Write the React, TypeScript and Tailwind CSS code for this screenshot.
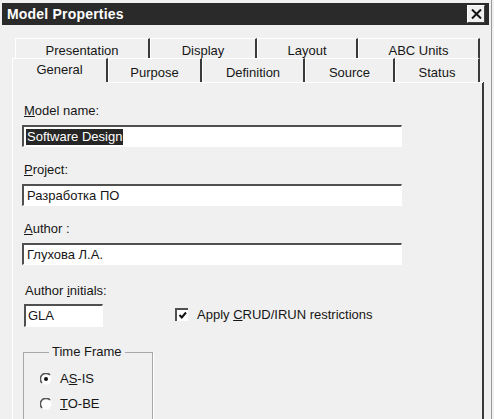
import React from "react";

const ROW_BACK = [
  { label: "Presentation", w: "w-[135px]" },
  { label: "Display", w: "w-[107px]" },
  { label: "Layout", w: "w-[101px]" },
  { label: "ABC Units", w: "w-[122px]" },
];

const ROW_FRONT = [
  { label: "General", w: "w-[96px]" },
  { label: "Purpose", w: "w-[94px]" },
  { label: "Definition", w: "w-[103px]" },
  { label: "Source", w: "w-[90px]" },
  { label: "Status", w: "w-[85px]" },
];

function Radio({ checked }: { checked?: boolean }) {
  return (
    <svg width="12" height="12" viewBox="0 0 12 12">
      <circle cx="6" cy="6" r="5.5" fill="#ffffff" />
      <path d="M10 2 A5.5 5.5 0 0 0 2 10" stroke="#555555" strokeWidth="1.6" fill="none" />
      {checked && <circle cx="6" cy="6" r="2" fill="#111111" />}
    </svg>
  );
}

function Field({ label, children }: { label: React.ReactNode; children: React.ReactNode }) {
  return (
    <div>
      <div className="ml-[2px] text-[13px] leading-[16px]">{label}</div>
      <div className="mt-[6px] flex h-[22px] w-[380px] items-center border-t-2 border-l-2 border-b border-r border-t-[#505050] border-l-[#505050] border-b-white border-r-white bg-white pl-[2px] text-[13px]">
        {children}
      </div>
    </div>
  );
}

export default function App() {
  return (
    <div className="h-[419px] w-[494px] overflow-hidden bg-[#f0f0f0] font-[Liberation_Sans,Arial,sans-serif] text-[#161616]">
      <div className="h-[419px] w-[492px] border-r border-[#9a9a9a] pl-[2px] pt-[3px]">
        {/* Title bar */}
        <div className="flex h-[22px] w-[487px] items-center justify-between bg-[#2a2a2a] pl-[5px] pr-[4px]">
          <span className="text-[14px] font-bold tracking-[0.2px] text-white">Model Properties</span>
          <div className="flex h-[18px] w-[18px] items-center justify-center border border-t-white border-l-white border-b-[#404040] border-r-[#404040] bg-[#f0f0f0]">
            <svg width="11" height="10" viewBox="0 0 11 10">
              <path d="M1 0.5 L10 9.5 M10 0.5 L1 9.5" stroke="#111111" strokeWidth="2" />
            </svg>
          </div>
        </div>

        {/* Tabs */}
        <div className="ml-[13px] mt-[13px] flex">
          {ROW_BACK.map((t) => (
            <div
              key={t.label}
              className={`${t.w} flex h-[20px] items-center justify-center border-t border-l border-r-2 border-t-white border-l-white border-r-[#3a3a3a] pt-[4px] text-[13px]`}
            >
              {t.label}
            </div>
          ))}
        </div>
        <div className="ml-[10px] flex">
          {ROW_FRONT.map((t, i) => (
            <div
              key={t.label}
              className={`${t.w} flex h-[24px] items-center justify-center border-t border-l border-r-2 border-t-white border-l-white border-r-[#3a3a3a] text-[13px] ${
                i === 0 ? "pb-[2px]" : "pt-[4px]"
              }`}
            >
              {t.label}
            </div>
          ))}
        </div>

        {/* Panel */}
        <div className="ml-[10px] h-[340px] w-[472px] border-r-2 border-l border-l-white border-r-[#3a3a3a]">
          <div className="ml-[96px] h-px w-[374px] bg-white" />
          <div className="pl-[9px] pt-[20px]">
            <Field label={<><u>M</u>odel name:</>}>
              <span className="bg-[#262626] px-[1px] leading-[16px] text-white">Software Design</span>
            </Field>
            <div className="mt-[15px]">
              <Field label={<><u>P</u>roject:</>}>
                <span className="pl-[1px]">Разработка ПО</span>
              </Field>
            </div>
            <div className="mt-[15px]">
              <Field label={<><u>A</u>uthor :</>}>
                <span className="pl-[1px]">Глухова Л.А.</span>
              </Field>
            </div>

            <div className="mt-[18px] flex items-end">
              <div className="ml-[2px] w-[151px]">
                <div className="ml-[1px] text-[13px] leading-[16px]">
                  Author <u>i</u>nitials:
                </div>
                <div className="mt-[5px] flex h-[23px] w-[79px] items-center border-t-2 border-l-2 border-b border-r border-t-[#505050] border-l-[#505050] border-b-white border-r-white bg-white pl-[2px] text-[13px]">
                  GLA
                </div>
              </div>
              <div className="mb-[3px] flex items-center gap-[9px] text-[13px]">
                <div className="flex h-[13px] w-[13px] items-center justify-center border-t-2 border-l-2 border-t-[#505050] border-l-[#505050] bg-white">
                  <svg width="9" height="9" viewBox="0 0 9 9">
                    <path d="M1.5 4 L3.8 6.5 L8 1.5" stroke="#111111" strokeWidth="2" fill="none" />
                  </svg>
                </div>
                <span>
                  Apply <u>C</u>RUD/IRUN restrictions
                </span>
              </div>
            </div>

            <fieldset className="ml-[1px] mt-[17px] h-[90px] w-[130px] border border-[#a8a8a8] pl-[16px] shadow-[1px_1px_0_#ffffff]">
              <legend className="ml-[9px] px-[3px] text-[13px] leading-[16px]">Time Frame</legend>
              <div className="mt-[6px] flex h-[25px] items-center gap-[8px] text-[13px]">
                <Radio checked />
                <span>
                  A<u>S</u>-IS
                </span>
              </div>
              <div className="flex h-[25px] items-center gap-[8px] text-[13px]">
                <Radio />
                <span>
                  <u>T</u>O-BE
                </span>
              </div>
            </fieldset>
          </div>
        </div>
      </div>
    </div>
  );
}
